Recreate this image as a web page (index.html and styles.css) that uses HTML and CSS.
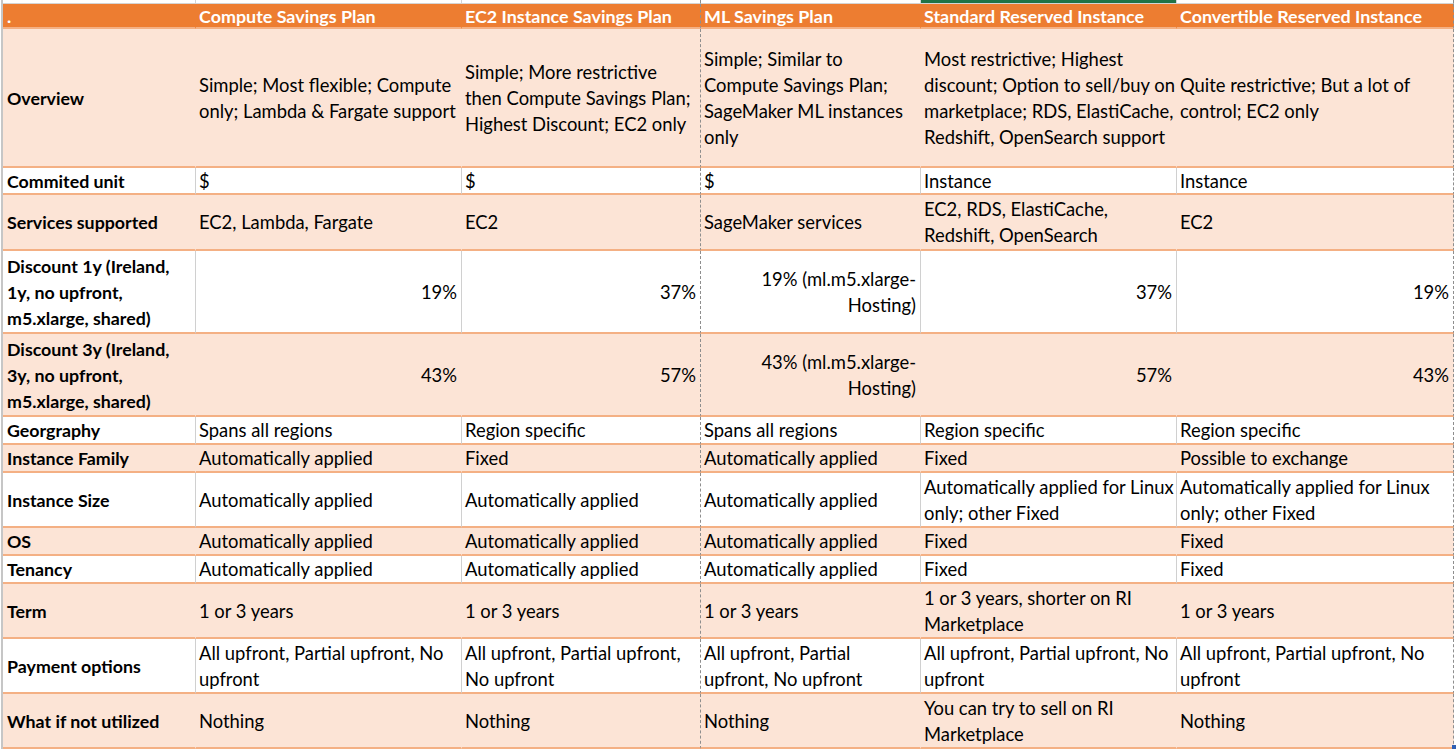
FILE: index.html
```html
<!DOCTYPE html>
<html lang="en">
<head>
<meta charset="utf-8">
<title>Savings Plans vs Reserved Instances</title>
<link rel="stylesheet" href="styles.css">
</head>
<body>
<div class="page">
  <div class="sheet">
    <div class="row top">
      <div class="c"></div><div class="c"></div><div class="c"></div><div class="c"></div><div class="c sel"></div><div class="c"></div>
    </div>
    <div class="row head">
      <div class="c">.</div>
      <div class="c">Compute Savings Plan</div>
      <div class="c">EC2 Instance Savings Plan</div>
      <div class="c">ML Savings Plan</div>
      <div class="c">Standard Reserved Instance</div>
      <div class="c">Convertible Reserved Instance</div>
    </div>
    <div class="row fill">
      <div class="c lbl">Overview</div>
      <div class="c">Simple; Most flexible; Compute<br>only; Lambda &amp; Fargate support</div>
      <div class="c">Simple; More restrictive<br>then Compute Savings Plan;<br>Highest Discount; EC2 only</div>
      <div class="c">Simple; Similar to<br>Compute Savings Plan;<br>SageMaker ML instances<br>only</div>
      <div class="c">Most restrictive; Highest<br>discount; Option to sell/buy on<br>marketplace; RDS, ElastiCache,<br>Redshift, OpenSearch support</div>
      <div class="c">Quite restrictive; But a lot of<br>control; EC2 only</div>
    </div>
    <div class="row white">
      <div class="c lbl">Commited unit</div>
      <div class="c">$</div>
      <div class="c">$</div>
      <div class="c">$</div>
      <div class="c">Instance</div>
      <div class="c">Instance</div>
    </div>
    <div class="row fill">
      <div class="c lbl">Services supported</div>
      <div class="c">EC2, Lambda, Fargate</div>
      <div class="c">EC2</div>
      <div class="c">SageMaker services</div>
      <div class="c">EC2, RDS, ElastiCache,<br>Redshift, OpenSearch</div>
      <div class="c">EC2</div>
    </div>
    <div class="row white">
      <div class="c lbl">Discount 1y (Ireland,<br>1y, no upfront,<br>m5.xlarge, shared)</div>
      <div class="c num">19%</div>
      <div class="c num">37%</div>
      <div class="c num">19% (ml.m5.xlarge-<br>Hosting)</div>
      <div class="c num">37%</div>
      <div class="c num">19%</div>
    </div>
    <div class="row fill">
      <div class="c lbl">Discount 3y (Ireland,<br>3y, no upfront,<br>m5.xlarge, shared)</div>
      <div class="c num">43%</div>
      <div class="c num">57%</div>
      <div class="c num">43% (ml.m5.xlarge-<br>Hosting)</div>
      <div class="c num">57%</div>
      <div class="c num">43%</div>
    </div>
    <div class="row white">
      <div class="c lbl">Georgraphy</div>
      <div class="c">Spans all regions</div>
      <div class="c">Region specific</div>
      <div class="c">Spans all regions</div>
      <div class="c">Region specific</div>
      <div class="c">Region specific</div>
    </div>
    <div class="row fill">
      <div class="c lbl">Instance Family</div>
      <div class="c">Automatically applied</div>
      <div class="c">Fixed</div>
      <div class="c">Automatically applied</div>
      <div class="c">Fixed</div>
      <div class="c">Possible to exchange</div>
    </div>
    <div class="row white">
      <div class="c lbl">Instance Size</div>
      <div class="c">Automatically applied</div>
      <div class="c">Automatically applied</div>
      <div class="c">Automatically applied</div>
      <div class="c">Automatically applied for Linux<br>only; other Fixed</div>
      <div class="c">Automatically applied for Linux<br>only; other Fixed</div>
    </div>
    <div class="row fill">
      <div class="c lbl">OS</div>
      <div class="c">Automatically applied</div>
      <div class="c">Automatically applied</div>
      <div class="c">Automatically applied</div>
      <div class="c">Fixed</div>
      <div class="c">Fixed</div>
    </div>
    <div class="row white">
      <div class="c lbl">Tenancy</div>
      <div class="c">Automatically applied</div>
      <div class="c">Automatically applied</div>
      <div class="c">Automatically applied</div>
      <div class="c">Fixed</div>
      <div class="c">Fixed</div>
    </div>
    <div class="row fill">
      <div class="c lbl">Term</div>
      <div class="c">1 or 3 years</div>
      <div class="c">1 or 3 years</div>
      <div class="c">1 or 3 years</div>
      <div class="c">1 or 3 years, shorter on RI<br>Marketplace</div>
      <div class="c">1 or 3 years</div>
    </div>
    <div class="row white">
      <div class="c lbl">Payment options</div>
      <div class="c">All upfront, Partial upfront, No<br>upfront</div>
      <div class="c">All upfront, Partial upfront,<br>No upfront</div>
      <div class="c">All upfront, Partial<br>upfront, No upfront</div>
      <div class="c">All upfront, Partial upfront, No<br>upfront</div>
      <div class="c">All upfront, Partial upfront, No<br>upfront</div>
    </div>
    <div class="row fill">
      <div class="c lbl">What if not utilized</div>
      <div class="c">Nothing</div>
      <div class="c">Nothing</div>
      <div class="c">Nothing</div>
      <div class="c">You can try to sell on RI<br>Marketplace</div>
      <div class="c corner">Nothing</div>
    </div>
  </div>
</div>
</body>
</html>
```

FILE: styles.css
```css
html, body {
  margin: 0;
  padding: 0;
  background: #ffffff;
}

.page {
  padding-left: 1px;
  width: 1455px;
  height: 750px;
  overflow: hidden;
}

.sheet {
  display: grid;
  grid-template-columns: 192px 266px 239px 220px 256px 278px;
  grid-template-rows: 4px 25px 139px 27px 56px 83px 83px 28px 28px 55px 28px 28px 55px 55px 55px;
  border-left: 2px solid #c6c6c6;
  width: max-content;
  font-family: "Lato", "Liberation Sans", sans-serif;
  font-size: 18.4px;
  line-height: 26px;
  color: #000000;
}

.row {
  display: contents;
}

.c {
  box-sizing: border-box;
  display: flex;
  align-items: center;
  padding: 0 4px 0 3px;
  border-bottom: 2px solid #f4b084;
  border-left: 1px solid transparent;
  white-space: nowrap;
  overflow: hidden;
}

.c:first-child {
  border-left: 0;
  padding-left: 4px;
}

.c:nth-child(4) {
  border-left: 1px dashed #8e8e8e;
}

.c:nth-child(6) {
  border-right: 1px dashed #8e8e8e;
}

.top .c {
  border-bottom: 1px solid #d4d4d4;
  border-left-color: #d4d4d4;
}

.top .c:nth-child(4) {
  border-left-color: #8e8e8e;
}

.top .sel {
  background: #217346;
}

.head .c {
  background: #ed7d31;
  color: #ffffff;
  font-weight: 700;
  font-size: 17.9px;
  line-height: 22px;
}

.fill .c {
  background: #fce4d6;
}

.white .c {
  background: #ffffff;
  border-left-color: #d0d0d0;
}

.white .c:nth-child(4) {
  border-left-color: #8e8e8e;
}

.lbl {
  font-weight: 700;
  font-size: 17.8px;
}

.num {
  justify-content: flex-end;
  text-align: right;
}

.corner {
  position: relative;
  overflow: visible;
}

.corner::after {
  content: "";
  position: absolute;
  right: -3px;
  bottom: -2px;
  width: 4px;
  height: 4px;
  background: #2f5fb3;
}
```
